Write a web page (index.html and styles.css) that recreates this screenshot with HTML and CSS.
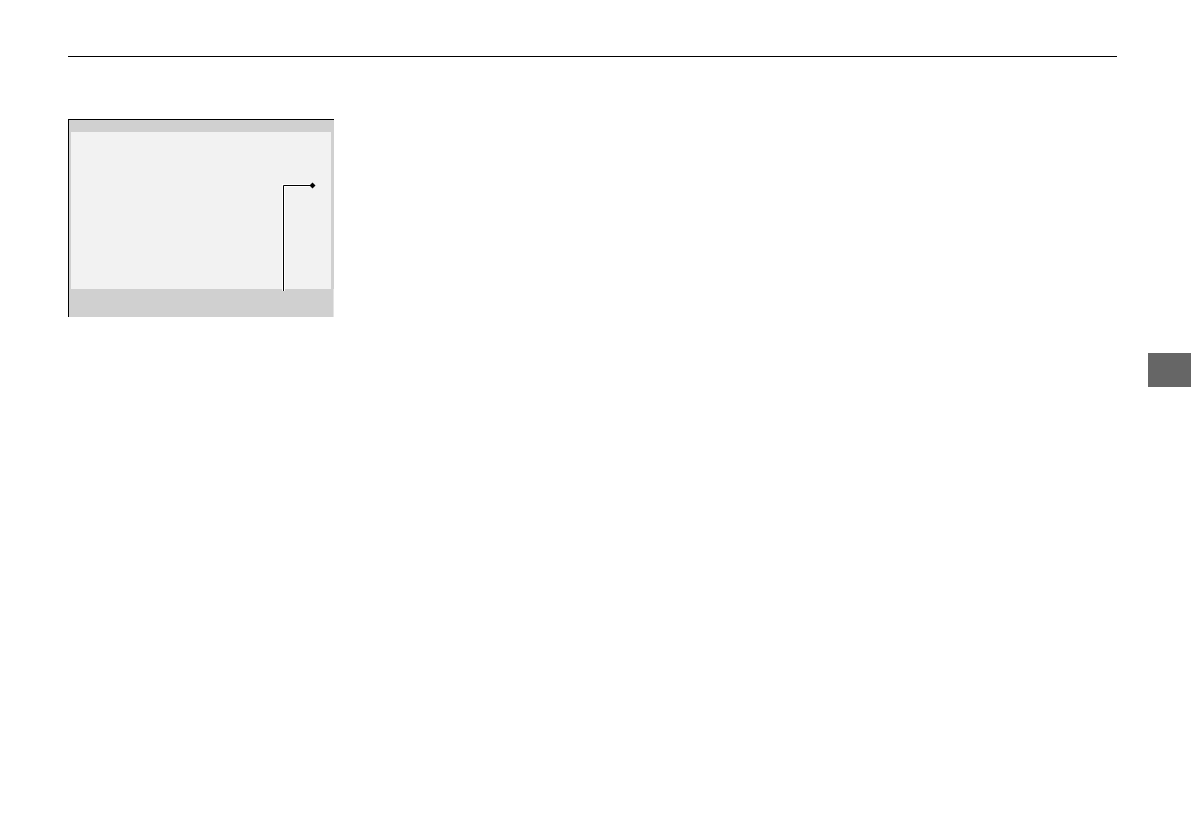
FILE: index.html
```html
<!DOCTYPE html>
<html lang="en">
<head>
<meta charset="utf-8">
<title>Manual page</title>
<link rel="stylesheet" href="styles.css">
</head>
<body>
<div class="page">
  <div class="rule"></div>
  <div class="screen">
    <div class="band-top"></div>
    <div class="display"><div class="display-inner"></div></div>
    <div class="band-bottom"></div>
    <svg class="callout" width="265" height="197" viewBox="0 0 265 197" aria-hidden="true">
      <polyline points="214.5,171 214.5,65.5 243,65.5" fill="none" stroke="#ffffff" stroke-width="3"/>
      <polyline points="214.5,171 214.5,65.5 243,65.5" fill="none" stroke="#000000" stroke-width="1"/>
      <polygon points="243.5,62.5 246.5,65.5 243.5,68.5 240.5,65.5" fill="#000000"/>
    </svg>
  </div>
  <div class="tab"></div>
</div>
</body>
</html>
```

FILE: styles.css
```css
html, body {
  margin: 0;
  padding: 0;
  background: #ffffff;
  font-family: "Liberation Sans", Arial, sans-serif;
}

.page {
  width: 1192px;
  height: 840px;
  display: flex;
  flex-direction: column;
  padding-top: 56px;
  box-sizing: border-box;
}

.rule {
  height: 1px;
  background: #000000;
  margin: 0 75px 0 68px;
}

.screen {
  position: relative;
  margin: 62px 0 0 68px;
  width: 266px;
  height: 198px;
  box-sizing: border-box;
  border-top: 1px solid #000000;
  border-left: 1px solid #000000;
  background: #d0d0d0;
  display: flex;
  flex-direction: column;
}

.band-top {
  height: 12px;
  background: #d0d0d0;
}

.display {
  height: 157px;
  padding: 0 3px 0 2px;
  background: #d0d0d0;
}

.display-inner {
  height: 100%;
  background: #f2f2f2;
}

.band-bottom {
  flex: 1;
  background: #d0d0d0;
  border-right: 1px solid #e4e4e4;
}

.callout {
  position: absolute;
  left: 0;
  top: 0;
}

.tab {
  align-self: flex-end;
  margin: 36px 1px 0 0;
  width: 43px;
  height: 34px;
  background: #666666;
}
```
